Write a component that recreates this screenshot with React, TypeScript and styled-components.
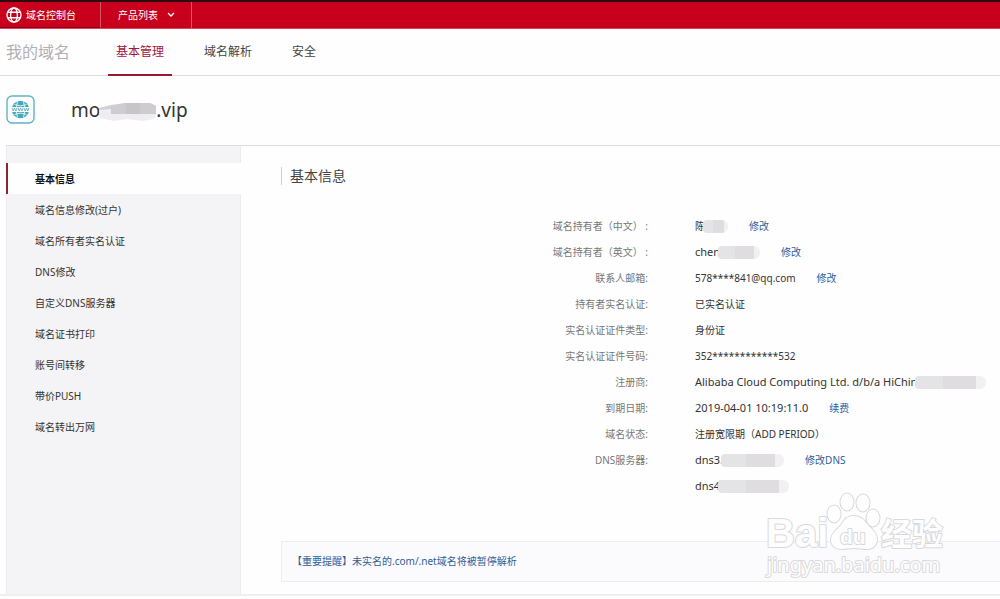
import React from "react";
import styled, { createGlobalStyle } from "styled-components";

const GlobalStyle = createGlobalStyle`
  * { box-sizing: border-box; }
  body {
    margin: 0;
    background: #fefefe;
    color: #333;
    font-family: "Noto Sans", "Noto Sans CJK SC", sans-serif;
    font-size: 10px;
    line-height: 16px;
  }
  a { text-decoration: none; }
  h1, h2, ul, dl, dd, dt { margin: 0; padding: 0; font-weight: 400; }
  ul { list-style: none; }
`;

const Page = styled.div`
  position: relative;
  overflow: hidden;
`;

const TopBar = styled.header`
  display: flex;
  height: 29px;
  background: #c8001b;
  border-top: 2px solid #2e0a10;
  border-bottom: 1px solid #d8485a;
`;

const Brand = styled.a`
  display: flex;
  align-items: center;
  gap: 4px;
  width: 101px;
  padding-left: 6px;
  color: #fff;
  border-right: 1px solid #dc5566;
  border-bottom: 1px solid #8c0012;
`;

const ProductButton = styled.button`
  display: flex;
  align-items: center;
  gap: 9px;
  width: 91px;
  padding: 0 0 0 17px;
  border: 0;
  border-right: 1px solid #dc5566;
  background: none;
  color: #fff;
  font: inherit;
`;

const SubNav = styled.nav`
  display: flex;
  height: 47px;
  padding-left: 6px;
  border-bottom: 1px solid #dcdce0;
`;

const SubNavTitle = styled.span`
  width: 102px;
  font-size: 16px;
  line-height: 46px;
  color: #b2b0b2;
`;

const Tab = styled.a<{ $active?: boolean }>`
  height: 47px;
  padding: 0 8px;
  margin-right: 24px;
  font-size: 12px;
  line-height: 46px;
  color: ${(p) => (p.$active ? "#a3163a" : "#444")};
  border-bottom: 2px solid ${(p) => (p.$active ? "#9c1a30" : "transparent")};
`;

const DomainHeader = styled.div`
  display: flex;
  align-items: center;
  gap: 36px;
  height: 70px;
  margin-left: 6px;
  padding-bottom: 2px;
  border-bottom: 1px solid #dcdce0;
`;

const DomainName = styled.h1`
  display: flex;
  align-items: center;
  font-size: 19px;
  line-height: 28px;
  color: #333;
`;

const NameMask = styled.svg`
  width: 62px;
  height: 22px;
  margin: 4px -2px 0 -4px;
`;

const Body = styled.div`
  display: grid;
  grid-template-columns: 235px 1fr;
  margin-bottom: 3px;
  padding-left: 6px;
  border-bottom: 2px solid #efeff0;
`;

const Sidebar = styled.ul`
  padding-top: 17px;
  background: #f4f3f6;
  border-left: 1px solid #ececee;
  border-right: 1px solid #ececee;
`;

const SideLink = styled.a<{ $active?: boolean }>`
  display: block;
  height: 31px;
  margin: 0 -1px;
  padding-left: 27px;
  line-height: 33px;
  color: ${(p) => (p.$active ? "#111" : "#333")};
  font-weight: ${(p) => (p.$active ? 700 : 400)};
  background: ${(p) => (p.$active ? "#fefefe" : "transparent")};
  border-left: 2px solid ${(p) => (p.$active ? "#8e2430" : "transparent")};
`;

const Main = styled.main`
  padding: 21px 0 12px 40px;
`;

const SectionTitle = styled.h2`
  padding-left: 8px;
  border-left: 1px solid #d0d0d4;
  font-size: 14px;
  line-height: 18px;
  color: #444;
`;

const InfoList = styled.dl`
  margin: 28px 0 42px;
`;

const InfoRow = styled.div`
  display: grid;
  grid-template-columns: 1fr 305px;
  column-gap: 47px;
  height: 26px;
  line-height: 26px;
`;

const Label = styled.dt`
  text-align: right;
  color: #777;
`;

const Value = styled.dd`
  display: flex;
  align-items: center;
  white-space: nowrap;
  font-size: 11px;
`;

const SmallText = styled.span`
  font-size: 10px;
`;

const Mask = styled.span<{ $w: number }>`
  width: ${(p) => p.$w}px;
  height: 13px;
  margin-left: -2px;
  border-radius: 4px 6px 6px 4px;
  background: linear-gradient(90deg, #e4e3e5 0 40%, #dfdde0 40% 86%, #f1f0f3 86%);
`;

const Action = styled.a`
  margin-left: 21px;
  font-size: 10px;
  color: #2c5f9e;
`;

const Notice = styled.div`
  height: 41px;
  padding-left: 10px;
  border: 1px solid #ececf2;
  border-right: 0;
  background: #fbfafd;
  line-height: 39px;
`;

const NoticeLink = styled.a`
  color: #2f5f98;
`;

const Watermark = styled.svg`
  position: absolute;
  right: 50px;
  bottom: 18px;
  width: 190px;
  height: 90px;
  pointer-events: none;
`;

const menu = [
  "基本信息",
  "域名信息修改(过户)",
  "域名所有者实名认证",
  "DNS修改",
  "自定义DNS服务器",
  "域名证书打印",
  "账号间转移",
  "带价PUSH",
  "域名转出万网",
];

type Info = { label: string; text: string; mask?: number; action?: string; small?: boolean };

const info: Info[] = [
  { label: "域名持有者（中文） :", text: "陈", mask: 25, action: "修改", small: true },
  { label: "域名持有者（英文） :", text: "chen", mask: 42, action: "修改" },
  { label: "联系人邮箱:", text: "578****841@qq.com", action: "修改", small: true },
  { label: "持有者实名认证:", text: "已实名认证", small: true },
  { label: "实名认证证件类型:", text: "身份证", small: true },
  { label: "实名认证证件号码:", text: "352************532", small: true },
  { label: "注册商:", text: "Alibaba Cloud Computing Ltd. d/b/a HiChin", mask: 71 },
  { label: "到期日期:", text: "2019-04-01 10:19:11.0", action: "续费" },
  { label: "域名状态:", text: "注册宽限期（ADD PERIOD）", small: true },
  { label: "DNS服务器:", text: "dns3.", mask: 63, action: "修改DNS" },
  { label: "", text: "dns4", mask: 71 },
];

const GlobeIcon = () => (
  <svg width="16" height="16" viewBox="0 0 16 16" fill="none" stroke="#fff" strokeWidth="1.4" aria-hidden="true">
    <circle cx="8" cy="8" r="7" />
    <ellipse cx="8" cy="8" rx="3.4" ry="7" />
    <path d="M1.6 5.3h12.8M1.6 10.7h12.8" />
  </svg>
);

const DomainIcon = () => (
  <svg width="29" height="29" viewBox="0 0 29 29" fill="none" aria-hidden="true">
    <rect x="1" y="1" width="27" height="27" rx="5" stroke="#5fb4c4" strokeWidth="1.4" />
    <circle cx="14.5" cy="14.5" r="8.7" fill="#45a9bb" />
    <path d="M8.5 9.6q6 2.6 12 0M8.5 19.4q6-2.6 12 0M11.5 6.5q-3 8 0 16M17.5 6.5q3 8 0 16" stroke="#fefefe" strokeWidth="0.8" />
    <rect x="4" y="12" width="21" height="5" fill="#fefefe" />
    <path d="M6 12.8l1.2 3.2 1.3-3 1.3 3 1.2-3.2M12 12.8l1.2 3.2 1.3-3 1.3 3 1.2-3.2M18 12.8l1.2 3.2 1.3-3 1.3 3 1.2-3.2" stroke="#45a9bb" strokeWidth="0.8" />
  </svg>
);

export default function App() {
  return (
    <>
      <GlobalStyle />
      <Page>
        <TopBar>
          <Brand href="#">
            <GlobeIcon />
            域名控制台
          </Brand>
          <ProductButton type="button">
            产品列表
            <svg width="8" height="6" viewBox="0 0 8 6" fill="none" stroke="#fff" strokeWidth="1.3" aria-hidden="true">
              <path d="M1 1l3 3 3-3" />
            </svg>
          </ProductButton>
        </TopBar>
        <SubNav>
          <SubNavTitle>我的域名</SubNavTitle>
          <Tab href="#" $active>基本管理</Tab>
          <Tab href="#">域名解析</Tab>
          <Tab href="#">安全</Tab>
        </SubNav>
        <DomainHeader>
          <DomainIcon />
          <DomainName>
            mo
            <NameMask viewBox="0 0 62 22" aria-hidden="true">
              <path d="M3 7l12-3 14-2h25l6 3v9H3z" fill="#d3d0d4" />
              <path d="M3 9l12-1v5h45l-2 5-12 2-14-2-14 2-14-3z" fill="#efedf1" />
              <path d="M15 5l15-3h24l6 3v8H15z" fill="#cfccd0" />
              <path d="M30 2h14v11H30z" fill="#c8c5c9" />
            </NameMask>
            .vip
          </DomainName>
        </DomainHeader>
        <Body>
          <Sidebar>
            {menu.map((item, i) => (
              <li key={item}>
                <SideLink href="#" $active={i === 0}>{item}</SideLink>
              </li>
            ))}
          </Sidebar>
          <Main>
            <SectionTitle>基本信息</SectionTitle>
            <InfoList>
              {info.map((row) => (
                <InfoRow key={row.text}>
                  <Label>{row.label}</Label>
                  <Value>
                    {row.small ? <SmallText>{row.text}</SmallText> : row.text}
                    {row.mask && <Mask $w={row.mask} />}
                    {row.action && <Action href="#">{row.action}</Action>}
                  </Value>
                </InfoRow>
              ))}
            </InfoList>
            <Notice>
              <NoticeLink href="#">【重要提醒】未实名的.com/.net域名将被暂停解析</NoticeLink>
            </Notice>
          </Main>
        </Body>
        <Watermark viewBox="0 0 190 90" aria-hidden="true">
          <g
            fill="#fefefe"
            stroke="#d9d9db"
            strokeWidth="2"
            strokeLinejoin="round"
            paintOrder="stroke"
            fontFamily='"Liberation Sans", "Noto Sans CJK SC", sans-serif'
            fontWeight="700"
          >
            <text x="6" y="56" fontSize="40">Bai</text>
            <ellipse cx="74" cy="23" rx="6.5" ry="8.5" />
            <ellipse cx="87" cy="11" rx="6.5" ry="8.5" />
            <ellipse cx="103" cy="12" rx="6.5" ry="8.5" />
            <ellipse cx="113" cy="27" rx="6.5" ry="8.5" />
            <path d="M93 25c-6 0-9 4-12 9-4 5-10 8-10 15 0 6 5 9 11 9 5 0 8-1 12-1s8 1 13 1c6 0 10-4 10-10 0-7-6-10-10-15-3-5-7-8-14-8z" />
            <text x="80" y="53" fontSize="21">du</text>
            <text x="121" y="54" fontSize="31">经验</text>
            <text x="7" y="81" fontSize="20" fontWeight="400" fontFamily='"Noto Sans", sans-serif'>jingyan.baidu.com</text>
          </g>
        </Watermark>
      </Page>
    </>
  );
}
